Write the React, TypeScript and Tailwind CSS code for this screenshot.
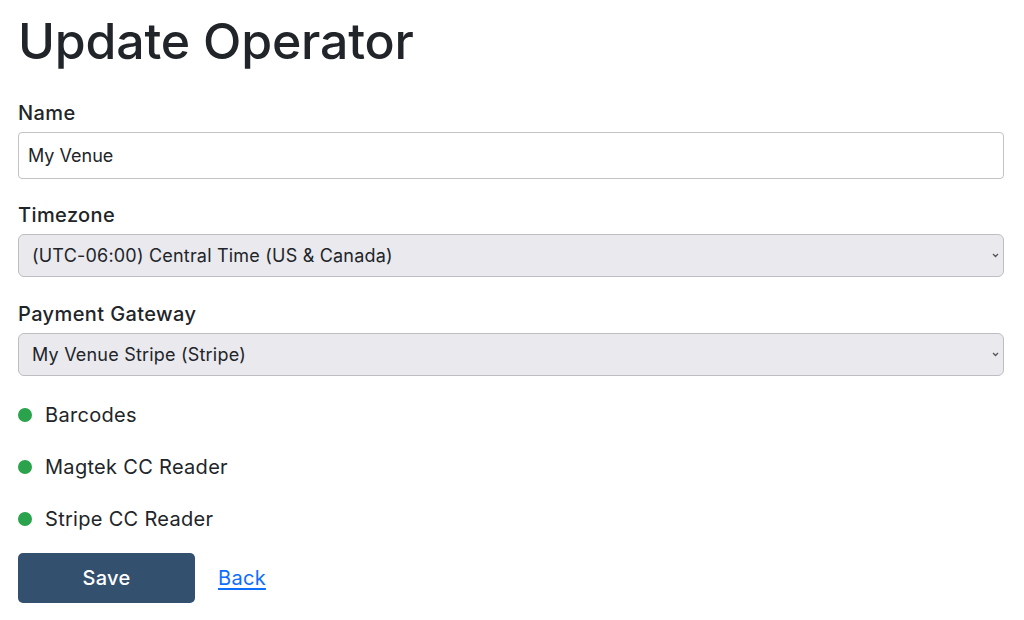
import { useState } from 'react'

const features = ['Barcodes', 'Magtek CC Reader', 'Stripe CC Reader']

export default function App() {
  const [name, setName] = useState('My Venue')
  const [timezone, setTimezone] = useState('central')
  const [gateway, setGateway] = useState('stripe')

  return (
    <div className="min-h-[620px] bg-white pl-[18px] pr-[20px] pt-[11px] font-['Inter','Liberation_Sans',sans-serif] text-[#212529]">
      <h1 className="text-[50px] font-medium leading-[60px] tracking-[-0.2px]">Update Operator</h1>

      <form onSubmit={(e) => e.preventDefault()}>
        {/* Name */}
        <label className="mt-[27px] block text-[20px] font-medium leading-[30px] tracking-[0.4px]">Name</label>
        <input
          value={name}
          onChange={(e) => setName(e.target.value)}
          className="mt-[4px] block h-[47px] w-full rounded-[4px] border border-[#c3c3c6] bg-white px-[9px] text-[18px] outline-none"
        />

        {/* Timezone */}
        <label className="mt-[21px] block text-[20px] font-medium leading-[30px] tracking-[0.4px]">Timezone</label>
        <SelectBox value={timezone} onChange={setTimezone}>
          <option value="central">(UTC-06:00) Central Time (US &amp; Canada)</option>
          <option value="eastern">(UTC-05:00) Eastern Time (US &amp; Canada)</option>
        </SelectBox>

        {/* Payment gateway */}
        <label className="mt-[22px] block text-[20px] font-medium leading-[30px] tracking-[0.4px]">Payment Gateway</label>
        <SelectBox value={gateway} onChange={setGateway}>
          <option value="stripe">My Venue Stripe (Stripe)</option>
        </SelectBox>

        <ul className="mt-[24px] flex flex-col gap-[22px]">
          {features.map((f) => (
            <li key={f} className="flex h-[30px] items-center text-[20px] leading-[30px] tracking-[0.3px]">
              <span className="mr-[13px] h-[14px] w-[14px] rounded-full bg-[#2ba24c]" />
              {f}
            </li>
          ))}
        </ul>

        <div className="mt-[19px] flex items-center">
          <button
            type="submit"
            className="h-[50px] w-[177px] rounded-[5px] bg-[#33506f] text-[20px] font-medium tracking-[0.3px] text-white"
          >
            Save
          </button>
          <a href="#" className="ml-[23px] text-[20px] tracking-[0.3px] text-[#0d6efd] underline underline-offset-[3px]">
            Back
          </a>
        </div>
      </form>
    </div>
  )
}

function SelectBox({
  value,
  onChange,
  children,
}: {
  value: string
  onChange: (v: string) => void
  children: React.ReactNode
}) {
  return (
    <div className="relative mt-[4px]">
      <select
        value={value}
        onChange={(e) => onChange(e.target.value)}
        className="block h-[43px] w-full appearance-none rounded-[6px] border border-[#bdbdc2] bg-[#e9e9ee] pl-[13px] text-[18px] tracking-[0.2px] text-[#212529] outline-none"
      >
        {children}
      </select>
      <svg
        className="pointer-events-none absolute right-[5px] top-[19px]"
        width="7"
        height="5"
        viewBox="0 0 7 5"
        fill="none"
      >
        <path d="M1 1l2.5 2.5L6 1" stroke="#555" strokeWidth="1.3" />
      </svg>
    </div>
  )
}
